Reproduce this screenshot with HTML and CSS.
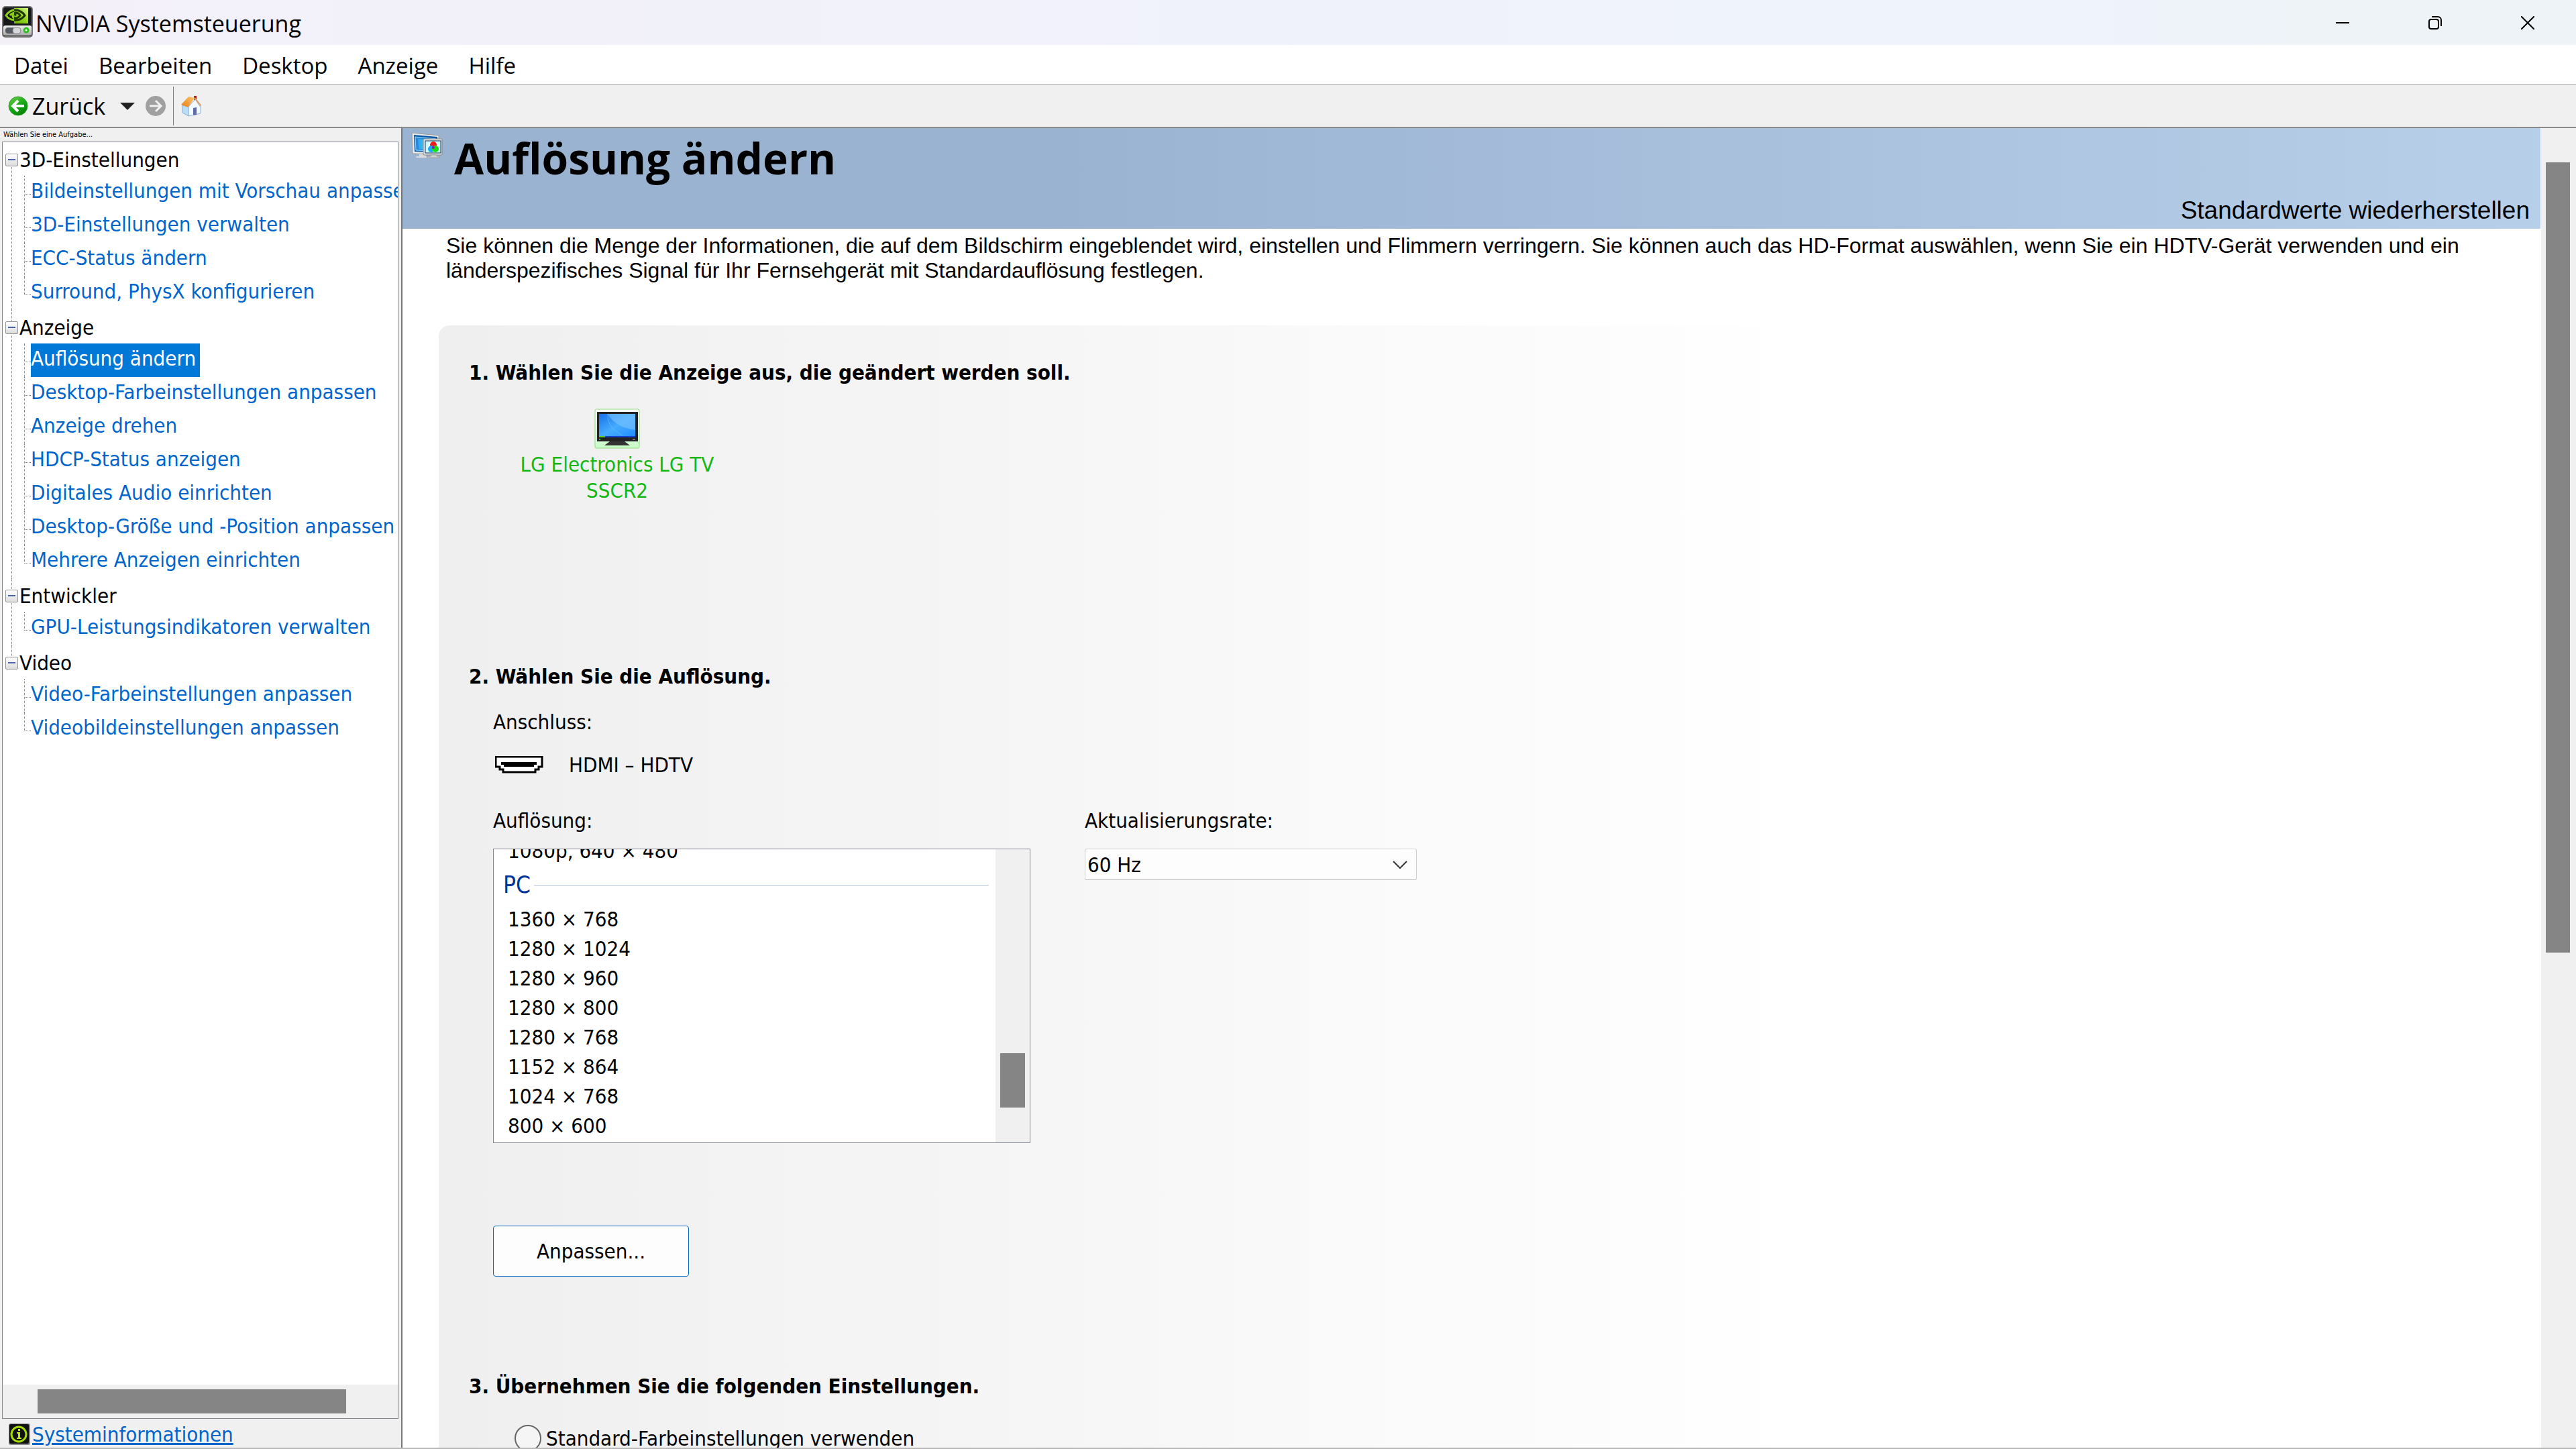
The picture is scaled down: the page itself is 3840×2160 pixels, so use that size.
FILE: index.html
```html
<!DOCTYPE html>
<html lang="de">
<head>
    <meta charset="UTF-8">
    <meta name="viewport" content="width=device-width, initial-scale=1.0">
    <title>NVIDIA Systemsteuerung</title>
    <link rel="stylesheet" href="styles.css">
</head>
<body>
    <header class="titlebar">
        <svg class="app-icon" viewBox="0 0 46 47" aria-hidden="true">
            <defs>
                <linearGradient id="nv-green" x1="1" y1="0" x2="0" y2="1">
                    <stop offset="0" stop-color="#d4f58a"/>
                    <stop offset="0.5" stop-color="#8fd21c"/>
                    <stop offset="1" stop-color="#6fb400"/>
                </linearGradient>
                <linearGradient id="nv-base" x1="0" y1="0" x2="0" y2="1">
                    <stop offset="0" stop-color="#f0f0f0"/>
                    <stop offset="1" stop-color="#a8a8a8"/>
                </linearGradient>
                <clipPath id="nv-left"><path d="M0 0h18v28H0z"/></clipPath>
                <clipPath id="nv-right"><path d="M18 0h28v28H18z"/></clipPath>
                <g id="nv-eye" fill="none" stroke-width="3">
                    <path d="M6 14C10 8 15 6 20 6s11 3 14 8c-4 5-8 7-13 7S10 20 6 14z"/>
                    <path d="M12 14c2-3 5-4 8-4s6 2 7 4c-2 3-4 4-7 4s-4-2-4-4 3-2 5 0"/>
                </g>
            </defs>
            <rect x="0" y="0" width="46" height="47" rx="5" fill="#777"/>
            <rect x="2" y="2" width="42" height="43" rx="3" fill="#16181a"/>
            <path d="M18 3h21v23H18z" fill="url(#nv-green)"/>
            <use href="#nv-eye" stroke="#8fd21c" clip-path="url(#nv-left)"/>
            <use href="#nv-eye" stroke="#203405" clip-path="url(#nv-right)"/>
            <rect x="2" y="29" width="42" height="15" rx="3" fill="url(#nv-base)"/>
            <rect x="5" y="32" width="23" height="9" rx="4" fill="#555a63"/>
            <rect x="16" y="32" width="12" height="9" rx="4" fill="#d5d7da" stroke="#888"/>
            <circle cx="36" cy="36" r="3" fill="#e8ffe0" stroke="#2fc020" stroke-width="3"/>
        </svg>
        <h1 class="window-title">NVIDIA Systemsteuerung</h1>
        <div class="window-buttons">
            <button type="button" aria-label="Minimieren">
                <svg viewBox="0 0 20 20"><path d="M0 10h20" stroke="#000" stroke-width="2"/></svg>
            </button>
            <button type="button" aria-label="Verkleinern">
                <svg viewBox="0 0 20 20" fill="none" stroke="#000" stroke-width="2"><rect x="1" y="5" width="14" height="14" rx="3"/><path d="M5 1h9a5 5 0 0 1 5 5v9"/></svg>
            </button>
            <button type="button" aria-label="Schließen">
                <svg viewBox="0 0 20 20"><path d="M0 0l20 20M20 0L0 20" stroke="#000" stroke-width="2"/></svg>
            </button>
        </div>
    </header>

    <nav class="menubar">
        <button type="button">Datei</button>
        <button type="button">Bearbeiten</button>
        <button type="button">Desktop</button>
        <button type="button">Anzeige</button>
        <button type="button">Hilfe</button>
    </nav>

    <div class="toolbar">
        <button type="button" class="back">
            <svg class="tool-icon" viewBox="0 0 30 30" aria-hidden="true">
                <defs>
                    <linearGradient id="back-green" x1="0" y1="0" x2="0.6" y2="1">
                        <stop offset="0" stop-color="#6fd14d"/>
                        <stop offset="0.6" stop-color="#12a812"/>
                        <stop offset="1" stop-color="#078207"/>
                    </linearGradient>
                </defs>
                <circle cx="15" cy="15" r="14" fill="url(#back-green)" stroke="#2f9e2a"/>
                <path d="M24 15H8M15 7l-8 8 8 8" fill="none" stroke="#fff" stroke-width="4"/>
            </svg>
            Zurück
        </button>
        <button type="button" class="history" aria-label="Verlauf">
            <svg viewBox="0 0 22 11"><path d="M0 0h22L11 11z" fill="#222"/></svg>
        </button>
        <button type="button" class="forward" aria-label="Vorwärts">
            <svg class="tool-icon" viewBox="0 0 30 30">
                <circle cx="15" cy="15" r="15" fill="#a0a0a0"/>
                <path d="M6 15h16M15 7l8 8-8 8" fill="none" stroke="#f0f0f0" stroke-width="3"/>
            </svg>
        </button>
        <span class="divider"></span>
        <button type="button" class="home" aria-label="Startseite">
            <svg viewBox="0 0 30 32">
                <defs>
                    <linearGradient id="roof" x1="0" y1="1" x2="1" y2="0">
                        <stop offset="0" stop-color="#e87d1c"/>
                        <stop offset="1" stop-color="#ffc566"/>
                    </linearGradient>
                </defs>
                <path d="M19 1h4v9h-4z" fill="#b3261e"/>
                <path d="M2 15l9 1v15l-9-5z" fill="#b9dcf8" stroke="#86add4"/>
                <path d="M11 17l10-11 8 12v9l-18 4z" fill="#f2f9ff" stroke="#8fb2d6"/>
                <path d="M18 19l5-1v11l-5 1z" fill="#5f6da8"/>
                <path d="M0 14L11 2l9 2-10 14z" fill="url(#roof)"/>
                <path d="M20 4l10 12" stroke="#d9a066" stroke-width="2"/>
            </svg>
        </button>
    </div>

    <div class="workspace">
        <aside class="sidebar">
            <p class="sidebar-hint">Wählen Sie eine Aufgabe...</p>
            <div class="tree-box">
                <ul class="tree">
                    <li>
                        <div class="group"><button type="button" aria-label="3D-Einstellungen zuklappen"></button>3D-Einstellungen</div>
                        <ul>
                            <li><a href="#">Bildeinstellungen mit Vorschau anpassen</a></li>
                            <li><a href="#">3D-Einstellungen verwalten</a></li>
                            <li><a href="#">ECC-Status ändern</a></li>
                            <li><a href="#">Surround, PhysX konfigurieren</a></li>
                        </ul>
                    </li>
                    <li>
                        <div class="group"><button type="button" aria-label="Anzeige zuklappen"></button>Anzeige</div>
                        <ul>
                            <li><a href="#" class="selected">Auflösung ändern</a></li>
                            <li><a href="#">Desktop-Farbeinstellungen anpassen</a></li>
                            <li><a href="#">Anzeige drehen</a></li>
                            <li><a href="#">HDCP-Status anzeigen</a></li>
                            <li><a href="#">Digitales Audio einrichten</a></li>
                            <li><a href="#">Desktop-Größe und -Position anpassen</a></li>
                            <li><a href="#">Mehrere Anzeigen einrichten</a></li>
                        </ul>
                    </li>
                    <li>
                        <div class="group"><button type="button" aria-label="Entwickler zuklappen"></button>Entwickler</div>
                        <ul>
                            <li><a href="#">GPU-Leistungsindikatoren verwalten</a></li>
                        </ul>
                    </li>
                    <li>
                        <div class="group"><button type="button" aria-label="Video zuklappen"></button>Video</div>
                        <ul>
                            <li><a href="#">Video-Farbeinstellungen anpassen</a></li>
                            <li><a href="#">Videobildeinstellungen anpassen</a></li>
                        </ul>
                    </li>
                </ul>
                <div class="tree-scroll"><div class="thumb"></div></div>
            </div>
            <div class="system-info">
                <svg viewBox="0 0 32 32" aria-hidden="true">
                    <rect width="32" height="32" rx="3" fill="#8b8b8b"/>
                    <rect x="1" y="1" width="29" height="29" rx="2" fill="#111"/>
                    <circle cx="15" cy="16" r="11" fill="none" stroke="#a4dc00" stroke-width="3"/>
                    <path d="M12 13h5v8h2v2h-7v-2h2v-6h-2zM14 8h3v3h-3z" fill="#b6ee14"/>
                </svg>
                <a href="#">Systeminformationen</a>
            </div>
        </aside>

        <main class="content">
            <div class="page">
                <div class="banner">
                    <svg class="banner-icon" viewBox="0 0 47 38" aria-hidden="true">
                        <defs>
                            <linearGradient id="screen" x1="0" y1="0" x2="1" y2="0">
                                <stop offset="0" stop-color="#28a4ee"/>
                                <stop offset="1" stop-color="#8ff4fa"/>
                            </linearGradient>
                        </defs>
                        <path d="M1 0l40 4v28L2 31z" fill="#e8eaec" stroke="#999"/>
                        <path d="M4 3l35 3v23L5 28z" fill="#0f58a8"/>
                        <path d="M6 6l31 3v18L7 26z" fill="#2c86d8" stroke="#9be3fb"/>
                        <path d="M10 9l27 3v14l-26-2z" fill="url(#screen)"/>
                        <path d="M12 32h10v3l4 2H7l1-2h4z" fill="#d9dbdd"/>
                        <rect x="18" y="9" width="28" height="24" rx="1" fill="#dfe2e5" stroke="#888"/>
                        <rect x="21" y="12" width="23" height="18" fill="#c8f6fb" stroke="#163a5c"/>
                        <circle cx="33" cy="21" r="8" fill="#fff"/>
                        <circle cx="33" cy="18" r="5" fill="#f01818"/>
                        <circle cx="30" cy="24" r="5" fill="#18a8f8"/>
                        <circle cx="36" cy="24" r="5" fill="#18e018"/>
                        <circle cx="33" cy="22" r="2" fill="#8020a0"/>
                        <path d="M29 33h9v2h3l2 2H23l2-2h4z" fill="#d0d3d6" stroke="#9a9da0"/>
                    </svg>
                    <h2>Auflösung ändern</h2>
                    <button type="button" class="restore">Standardwerte wiederherstellen</button>
                </div>

                <p class="description">Sie können die Menge der Informationen, die auf dem Bildschirm eingeblendet wird, einstellen und Flimmern verringern. Sie können auch das HD-Format auswählen, wenn Sie ein HDTV-Gerät verwenden und ein<br>länderspezifisches Signal für Ihr Fernsehgerät mit Standardauflösung festlegen.</p>

                <div class="panel">
                    <h3>1. Wählen Sie die Anzeige aus, die geändert werden soll.</h3>
                    <div class="displays">
                        <button type="button" class="display">
                            <svg viewBox="0 0 68 60" aria-hidden="true">
                                <defs>
                                    <linearGradient id="desk" x1="0" y1="0" x2="1" y2="1">
                                        <stop offset="0" stop-color="#1670e8"/>
                                        <stop offset="0.5" stop-color="#46acff"/>
                                        <stop offset="1" stop-color="#1e8cff"/>
                                    </linearGradient>
                                    <linearGradient id="glow" x1="0" y1="0" x2="0" y2="1">
                                        <stop offset="0" stop-color="#fff"/>
                                        <stop offset="1" stop-color="#c8fcc8"/>
                                    </linearGradient>
                                </defs>
                                <rect x="1" y="1" width="66" height="58" rx="2" fill="url(#glow)" stroke="#8fdc7c"/>
                                <rect x="4" y="5" width="61" height="44" fill="#222"/>
                                <rect x="7" y="8" width="54" height="35" fill="url(#desk)"/>
                                <path d="M20 8h41v24C42 30 26 20 20 8z" fill="#7cc4ff" opacity="0.6"/>
                                <path d="M20 8c0 14 6 24 22 32" fill="none" stroke="#7cc4ff" opacity="0.5"/>
                                <path d="M7 41h54v2H7z" fill="#1440d0"/>
                                <path d="M7 41h9v2H7z" fill="#58d020"/>
                                <path d="M7 45h2v2H7z" fill="#30c030"/>
                                <path d="M57 45h4v2h-4z" fill="#777"/>
                                <path d="M23 49h22l8 6H15z" fill="#333"/>
                            </svg>
                            LG Electronics LG TV<br>SSCR2
                        </button>
                    </div>

                    <h3>2. Wählen Sie die Auflösung.</h3>
                    <div class="connector">
                        <p>Anschluss:</p>
                        <p class="connector-type">
                            <svg viewBox="0 0 72 26" aria-hidden="true">
                                <path d="M1 1h69v15h-5v4h-5v4H12v-4H7v-4H1z" fill="#fff" stroke="#000" stroke-width="3"/>
                                <path d="M9 9h53v4h-4v3H13v-3H9z"/>
                            </svg>
                            HDMI – HDTV
                        </p>
                    </div>
                    <div class="settings">
                        <div class="resolution">
                            <p id="resolution-label">Auflösung:</p>
                            <div class="listbox" role="radiogroup" aria-labelledby="resolution-label">
                                <div class="modes">
                                    <label><input type="radio" name="mode">1080p, 640 × 480</label>
                                    <div class="mode-group">PC</div>
                                    <label><input type="radio" name="mode">1360 × 768</label>
                                    <label><input type="radio" name="mode">1280 × 1024</label>
                                    <label><input type="radio" name="mode">1280 × 960</label>
                                    <label><input type="radio" name="mode">1280 × 800</label>
                                    <label><input type="radio" name="mode">1280 × 768</label>
                                    <label><input type="radio" name="mode">1152 × 864</label>
                                    <label><input type="radio" name="mode">1024 × 768</label>
                                    <label><input type="radio" name="mode">800 × 600</label>
                                </div>
                                <div class="list-scroll"><div class="thumb"></div></div>
                            </div>
                        </div>
                        <div class="refresh">
                            <label for="refresh-rate">Aktualisierungsrate:</label>
                            <div class="select-wrap">
                                <select id="refresh-rate">
                                    <option>60 Hz</option>
                                </select>
                                <svg viewBox="0 0 22 12" aria-hidden="true"><path d="M1 1l10 10L21 1" fill="none" stroke="#333" stroke-width="2"/></svg>
                            </div>
                        </div>
                    </div>
                    <button type="button" class="customize">Anpassen...</button>

                    <h3>3. Übernehmen Sie die folgenden Einstellungen.</h3>
                    <label class="color-option"><input type="radio" name="color">Standard-Farbeinstellungen verwenden</label>
                </div>
            </div>
            <div class="page-scroll"><div class="thumb"></div></div>
        </main>
    </div>
</body>
</html>
```
FILE: styles.css
```css
* {
    box-sizing: border-box;
}

body {
    margin: 0;
    height: 100vh;
    display: flex;
    flex-direction: column;
    overflow: hidden;
    background-color: #f0f0f0;
    color: #000;
    font-family: "DejaVu Sans Condensed", "Noto Sans", sans-serif;
    font-size: 31px;
    line-height: 40px;
}

h1, h2, h3, p, ul {
    margin: 0;
    padding: 0;
}

ul {
    list-style: none;
}

button {
    padding: 0;
    border: none;
    background: none;
    color: inherit;
    font: inherit;
}

svg {
    display: block;
    flex: none;
}

.thumb {
    background-color: #858585;
}

/* Title bar */
.titlebar {
    display: flex;
    align-items: center;
    height: 67px;
    flex: none;
    padding-left: 3px;
    gap: 4px;
    background: linear-gradient(to right, #f3f0f8, #eef3fc 80%, #eef3f8 90%);
}

.app-icon {
    width: 46px;
    height: 47px;
    margin-bottom: 2px;
}

.window-title {
    flex: 1;
    font-family: "Open Sans", "Noto Sans", sans-serif;
    font-size: 34px;
    font-weight: normal;
    padding-top: 2px;
}

.window-buttons {
    display: flex;
}

.window-buttons button {
    display: flex;
    justify-content: center;
    align-items: center;
    width: 138px;
    height: 63px;
}

.window-buttons svg {
    width: 20px;
    height: 20px;
}

.window-buttons button:last-child {
    margin-right: 3px;
}

/* Menu bar */
.menubar {
    display: flex;
    align-items: center;
    flex: none;
    gap: 45px;
    height: 59px;
    padding-left: 21px;
    background-color: #fff;
    border-bottom: 1px solid #a0a0a0;
    font-family: "Open Sans", "Noto Sans", sans-serif;
    font-size: 33px;
}

.menubar button {
    padding-top: 3px;
}

/* Toolbar */
.toolbar {
    display: flex;
    align-items: center;
    flex: none;
    height: 65px;
    padding-left: 12px;
    border-top: 1px solid #fff;
    border-bottom: 2px solid #8a8a8a;
}

.tool-icon {
    width: 30px;
    height: 30px;
}

.back {
    display: flex;
    align-items: center;
    gap: 6px;
    font-family: "Open Sans", "Noto Sans", sans-serif;
    font-size: 34px;
}

.history {
    margin-left: 22px;
}

.history svg {
    width: 22px;
    height: 11px;
}

.forward {
    margin-left: 16px;
}

.divider {
    width: 1px;
    height: 58px;
    margin: 0 11px;
    background-color: #808080;
}

.home svg {
    width: 30px;
    height: 32px;
}

/* Workspace */
.workspace {
    display: flex;
    flex: 1;
    min-height: 0;
    border-bottom: 2px solid #b8b8b8;
}

.sidebar {
    display: flex;
    flex-direction: column;
    width: 600px;
    flex: none;
    padding: 0 4px 0 3px;
    border-right: 2px solid #777;
}

.sidebar-hint {
    height: 20px;
    padding-left: 2px;
    font-size: 11px;
    line-height: 20px;
}

.tree-box {
    display: flex;
    flex-direction: column;
    flex: 1;
    border: 1px solid #828790;
    background-color: #fff;
    overflow: hidden;
}

.tree {
    flex: 1;
}

.tree > li {
    position: relative;
}

/* Dotted trunk between the group expanders */
.tree > li::before {
    content: "";
    position: absolute;
    top: 0;
    bottom: 0;
    left: 13px;
    border-left: 1px dotted #808080;
}

.tree > li:first-child::before {
    top: 26px;
}

.tree > li:last-child::before {
    bottom: auto;
    height: 26px;
}

.group {
    display: flex;
    align-items: center;
    gap: 2px;
    height: 50px;
    padding: 2px 0 0 4px;
}

.group button {
    position: relative;
    display: flex;
    justify-content: center;
    align-items: center;
    width: 19px;
    height: 19px;
    border: 1px solid #919191;
    border-radius: 2px;
    background: linear-gradient(to bottom, #fff, #dcdcdc);
}

.group button::before {
    content: "";
    width: 11px;
    height: 2px;
    background-color: #4b63a7;
}

.tree ul li {
    position: relative;
    height: 50px;
    padding-left: 42px;
    white-space: nowrap;
}

.tree ul li::before {
    content: "";
    position: absolute;
    top: 0;
    left: 32px;
    width: 9px;
    height: 27px;
    border-left: 1px dotted #808080;
    border-bottom: 1px dotted #808080;
}

.tree ul li:not(:last-child)::after {
    content: "";
    position: absolute;
    top: 27px;
    bottom: 0;
    left: 32px;
    border-left: 1px dotted #808080;
}

.tree a {
    display: inline-block;
    height: 50px;
    padding-right: 6px;
    line-height: 44px;
    color: #0066cc;
    text-decoration: none;
}

.tree a.selected {
    background-color: #0078d7;
    color: #fff;
}

.tree-scroll {
    flex: none;
    height: 50px;
    padding: 7px 77px 7px 52px;
    background-color: #f0f0f0;
}

.tree-scroll .thumb {
    height: 36px;
}

.system-info {
    display: flex;
    align-items: center;
    flex: none;
    gap: 3px;
    height: 43px;
    padding: 3px 0 0 10px;
}

.system-info svg {
    width: 32px;
    height: 32px;
}

.system-info a {
    color: #0066cc;
}

/* Content */
.content {
    display: flex;
    flex: 1;
    min-width: 0;
    background-color: #fff;
}

.page {
    flex: 1;
    min-width: 0;
    overflow: hidden;
}

.page-scroll {
    flex: none;
    width: 53px;
    padding: 51px 9px 0 7px;
    border-left: 1px solid #fff;
    background-color: #f0f0f0;
}

.page-scroll .thumb {
    height: calc(62% - 10px);
}

.banner {
    display: flex;
    align-items: flex-start;
    height: 150px;
    padding: 7px 16px 7px 13px;
    background: linear-gradient(to right, #9ab3d1 30%, #b8cfe9);
}

.banner-icon {
    width: 47px;
    height: 38px;
}

.banner h2 {
    flex: 1;
    padding-left: 17px;
    font-family: "Open Sans", "Noto Sans", sans-serif;
    font-size: 64px;
    font-weight: bold;
    line-height: 76px;
}

.restore {
    align-self: flex-end;
    font-family: "Liberation Sans", Arial, sans-serif;
    font-size: 37px;
}

.description {
    padding: 7px 0 0 65px;
    font-family: "Liberation Sans", Arial, sans-serif;
    font-size: 32px;
    line-height: 37px;
    white-space: nowrap;
}

.panel {
    margin: 63px 0 0 54px;
    padding: 50px 0 0 45px;
    border-radius: 16px 0 0 0;
    background: linear-gradient(to right, #efefef, #fff 65%);
}

.panel h3 {
    font-size: 31px;
    font-weight: bold;
}

.displays {
    min-height: 413px;
    padding: 34px 0 0 34px;
}

.display {
    display: block;
    width: 374px;
    line-height: 39px;
    color: #14b814;
}

.display svg {
    width: 68px;
    height: 60px;
    margin: 0 auto 4px;
}

.connector {
    display: flex;
    flex-direction: column;
    gap: 24px;
    padding: 28px 0 43px 36px;
}

.connector-type {
    display: flex;
    align-items: center;
    gap: 38px;
    padding-left: 3px;
}

.connector-type svg {
    width: 72px;
    height: 26px;
}

.settings {
    display: flex;
    align-items: flex-start;
    gap: 81px;
    padding-left: 36px;
}

.resolution,
.refresh {
    display: flex;
    flex-direction: column;
    gap: 22px;
}

.listbox {
    display: flex;
    width: 801px;
    height: 439px;
    border: 1px solid #828790;
    background-color: #fff;
    overflow: hidden;
}

/* List is scrolled so that its first row is cut off */
.modes {
    display: flex;
    flex-direction: column;
    justify-content: flex-end;
    flex: 1;
    padding: 0 10px 3px 14px;
}

.modes label {
    flex: none;
    height: 44px;
    padding-left: 7px;
    line-height: 44px;
}

.modes input {
    appearance: none;
    margin: 0;
}

.mode-group {
    display: flex;
    align-items: center;
    flex: none;
    gap: 5px;
    height: 58px;
    color: #003399;
    font-size: 35px;
    line-height: 62px;
}

.mode-group::after {
    content: "";
    flex: 1;
    height: 1px;
    background-color: #b0c0dc;
}

.list-scroll {
    display: flex;
    align-items: flex-end;
    width: 51px;
    padding: 0 7px 52px;
    background-color: #f0f0f0;
}

.list-scroll .thumb {
    width: 100%;
    height: 81px;
}

.select-wrap {
    position: relative;
}

.select-wrap select {
    appearance: none;
    display: block;
    width: 495px;
    height: 47px;
    padding: 0 50px 0 3px;
    border: 1px solid #d0d0d0;
    border-bottom-color: #b8b8b8;
    border-radius: 3px;
    background-color: #fdfdfd;
    color: #000;
    font: inherit;
}

.select-wrap svg {
    position: absolute;
    top: 18px;
    right: 14px;
    width: 22px;
    height: 12px;
}

.customize {
    display: block;
    width: 292px;
    height: 76px;
    margin: 123px 0 143px 36px;
    border: 1px solid #0067c0;
    border-radius: 4px;
    background-color: #fdfdfd;
}

.color-option {
    display: flex;
    align-items: center;
    gap: 7px;
    padding: 38px 0 60px 68px;
}

.color-option input {
    appearance: none;
    width: 40px;
    height: 40px;
    margin: 0;
    border: 2px solid #666;
    border-radius: 50%;
    background-color: #f5f5f5;
}
```
